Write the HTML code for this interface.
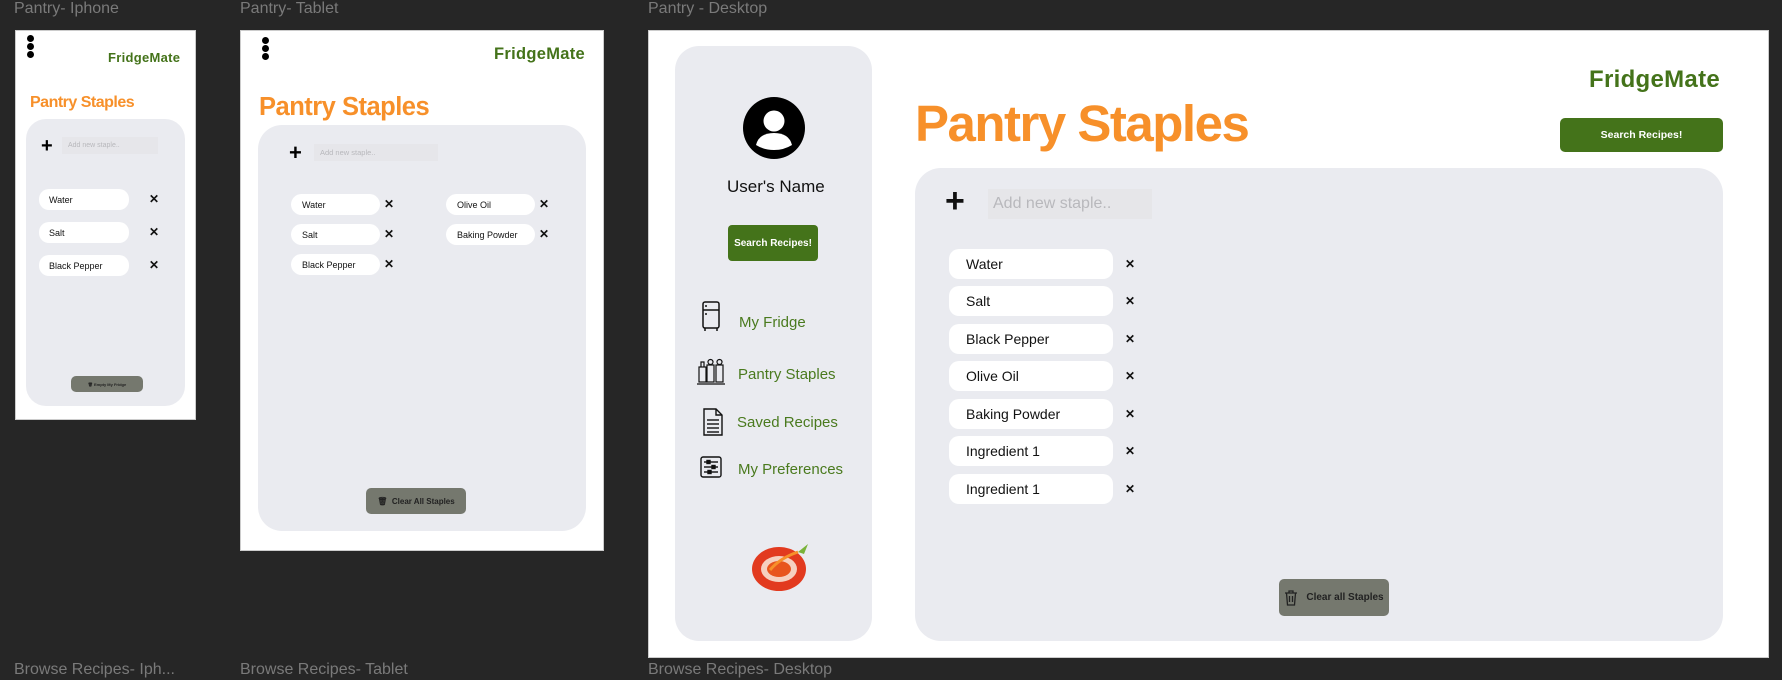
<!DOCTYPE html>
<html><head><meta charset="utf-8"><style>
*{margin:0;padding:0;box-sizing:border-box}
body{width:1782px;height:680px;background:#262626;position:relative;overflow:hidden;font-family:"Liberation Sans",sans-serif}
.a{position:absolute}
.lbl{color:#7a7a7a;font-size:16px;white-space:nowrap}
.frame{background:#fff;position:absolute}
.panel{background:#eaebf0;position:absolute}
.brand{color:#44731a;font-weight:900;white-space:nowrap;letter-spacing:0.3px}
.title{color:#f7902a;font-weight:900;white-space:nowrap;letter-spacing:-0.5px}
.pill{position:absolute;background:#fff;color:#111;white-space:nowrap;display:flex;align-items:center}
.x{position:absolute;color:#111;font-weight:bold;line-height:1}
.btn{position:absolute;background:#44731a;color:#fff;font-weight:bold;display:flex;align-items:center;justify-content:center;white-space:nowrap}
.clr{position:absolute;background:#75786e;color:#222;display:flex;align-items:center;justify-content:center;white-space:nowrap;font-weight:bold}
.ph{position:absolute;background:#e6e6ea;color:#b8b8bc;display:flex;align-items:center;white-space:nowrap}
.nav{position:absolute;color:#4a7a1e;font-size:15px;white-space:nowrap}
.dots{position:absolute;width:7px}
.dots i{display:block;width:7px;height:7px;border-radius:50%;background:#000;margin-bottom:1px}
</style></head><body>
<div class="a lbl" style="left:14px;top:0">Pantry- Iphone</div>
<div class="a lbl" style="left:240px;top:0">Pantry- Tablet</div>
<div class="a lbl" style="left:648px;top:0">Pantry - Desktop</div>
<div class="a lbl" style="left:14px;top:661px">Browse Recipes- Iph...</div>
<div class="a lbl" style="left:240px;top:661px">Browse Recipes- Tablet</div>
<div class="a lbl" style="left:648px;top:661px">Browse Recipes- Desktop</div>

<!-- iPhone -->
<div class="frame" style="left:15px;top:30px;width:181px;height:390px;border:1px solid #ccc"></div>
<div class="dots" style="left:27px;top:35px"><i></i><i></i><i></i></div>
<div class="a brand" style="left:108px;top:50px;font-size:13px">FridgeMate</div>
<div class="a title" style="left:30px;top:94px;font-size:16px">Pantry Staples</div>
<div class="panel" style="left:26px;top:119px;width:159px;height:287px;border-radius:20px"></div>
<div class="a" style="left:41px;top:136px;font-size:20px;font-weight:bold;line-height:1">+</div>
<div class="ph" style="left:62px;top:137px;width:96px;height:17px;font-size:7px;padding-left:6px">Add new staple..</div>
<div class="pill" style="left:39px;top:189px;width:90px;height:21px;border-radius:10px;font-size:9px;padding-left:10px">Water</div>
<div class="pill" style="left:39px;top:222px;width:90px;height:21px;border-radius:10px;font-size:9px;padding-left:10px">Salt</div>
<div class="pill" style="left:39px;top:255px;width:90px;height:21px;border-radius:10px;font-size:9px;padding-left:10px">Black Pepper</div>
<div class="x" style="left:149px;top:193px;font-size:12px">✕</div>
<div class="x" style="left:149px;top:226px;font-size:12px">✕</div>
<div class="x" style="left:149px;top:259px;font-size:12px">✕</div>
<div class="clr" style="left:71px;top:376px;width:72px;height:16px;border-radius:5px;font-size:4px">🗑&nbsp;Empty My Fridge</div>

<!-- Tablet -->
<div class="frame" style="left:240px;top:30px;width:364px;height:521px;border:1px solid #ccc"></div>
<div class="dots" style="left:262px;top:37px"><i></i><i></i><i></i></div>
<div class="a brand" style="left:494px;top:45px;font-size:16.5px">FridgeMate</div>
<div class="a title" style="left:259px;top:93px;font-size:25.5px">Pantry Staples</div>
<div class="panel" style="left:258px;top:125px;width:328px;height:406px;border-radius:24px"></div>
<div class="a" style="left:289px;top:142px;font-size:22px;font-weight:bold;line-height:1">+</div>
<div class="ph" style="left:314px;top:144px;width:124px;height:17px;font-size:7.5px;padding-left:6px">Add new staple..</div>
<div class="pill" style="left:291px;top:194px;width:89px;height:21px;border-radius:11px;font-size:9px;padding-left:11px">Water</div>
<div class="pill" style="left:291px;top:224px;width:89px;height:21px;border-radius:11px;font-size:9px;padding-left:11px">Salt</div>
<div class="pill" style="left:291px;top:254px;width:89px;height:21px;border-radius:11px;font-size:9px;padding-left:11px">Black Pepper</div>
<div class="pill" style="left:446px;top:194px;width:89px;height:21px;border-radius:11px;font-size:9px;padding-left:11px">Olive Oil</div>
<div class="pill" style="left:446px;top:224px;width:89px;height:21px;border-radius:11px;font-size:9px;padding-left:11px">Baking Powder</div>
<div class="x" style="left:384px;top:198px;font-size:12px">✕</div>
<div class="x" style="left:384px;top:228px;font-size:12px">✕</div>
<div class="x" style="left:384px;top:258px;font-size:12px">✕</div>
<div class="x" style="left:539px;top:198px;font-size:12px">✕</div>
<div class="x" style="left:539px;top:228px;font-size:12px">✕</div>
<div class="clr" style="left:366px;top:488px;width:100px;height:26px;border-radius:5px;font-size:8px">🗑&nbsp;&nbsp;Clear All Staples</div>

<!-- Desktop -->
<div class="frame" style="left:648px;top:30px;width:1121px;height:628px;border:1px solid #ccc"></div>
<div class="panel" style="left:675px;top:46px;width:197px;height:595px;border-radius:24px"></div>
<svg class="a" style="left:743px;top:97px" width="62" height="62" viewBox="0 0 62 62"><circle cx="31" cy="31" r="31" fill="#000"/><circle cx="31" cy="24" r="10.5" fill="#fff"/><path d="M13 48 Q16 36 31 36 Q46 36 49 48 Q41 53 31 53 Q21 53 13 48Z" fill="#fff"/></svg>
<div class="a" style="left:727px;top:177px;font-size:17px;color:#111">User's Name</div>
<div class="btn" style="left:728px;top:225px;width:90px;height:36px;border-radius:4px;font-size:10px">Search Recipes!</div>
<svg class="a" style="left:700px;top:300px" width="22" height="32" viewBox="0 0 22 32" fill="none" stroke="#111" stroke-width="1.5"><rect x="3" y="2" width="16" height="26" rx="2"/><line x1="3" y1="10" x2="19" y2="10"/><line x1="6" y1="5" x2="6" y2="7"/><line x1="6" y1="13" x2="6" y2="15"/><line x1="5" y1="28" x2="5" y2="31"/><line x1="17" y1="28" x2="17" y2="31"/></svg>
<div class="nav" style="left:739px;top:314px">My Fridge</div>
<svg class="a" style="left:697px;top:357px" width="28" height="28" viewBox="0 0 28 28" fill="none" stroke="#111" stroke-width="1.2"><rect x="2" y="10" width="7" height="15"/><rect x="10" y="8" width="7" height="17"/><rect x="19" y="8" width="7" height="17"/><circle cx="13.5" cy="5" r="2.5"/><circle cx="22.5" cy="5" r="2.5"/><path d="M4 10V5h3v5"/><line x1="0" y1="27" x2="28" y2="27"/></svg>
<div class="nav" style="left:738px;top:366px">Pantry Staples</div>
<svg class="a" style="left:702px;top:408px" width="22" height="28" viewBox="0 0 22 28" fill="none" stroke="#111" stroke-width="1.4"><path d="M2 1h12l6 6v20H2z"/><path d="M14 1v6h6"/><line x1="5" y1="12" x2="17" y2="12"/><line x1="5" y1="16" x2="17" y2="16"/><line x1="5" y1="20" x2="17" y2="20"/><line x1="5" y1="24" x2="17" y2="24"/></svg>
<div class="nav" style="left:737px;top:414px">Saved Recipes</div>
<svg class="a" style="left:700px;top:456px" width="22" height="22" viewBox="0 0 22 22" fill="none" stroke="#111" stroke-width="1.4"><rect x="1" y="1" width="20" height="20" rx="2"/><line x1="4" y1="6" x2="18" y2="6"/><line x1="4" y1="11" x2="18" y2="11"/><line x1="4" y1="16" x2="18" y2="16"/><rect x="7" y="4.5" width="3" height="3" fill="#111"/><rect x="12" y="9.5" width="3" height="3" fill="#111"/><rect x="8" y="14.5" width="3" height="3" fill="#111"/></svg>
<div class="nav" style="left:738px;top:461px">My Preferences</div>
<svg class="a" style="left:750px;top:540px" width="62" height="52" viewBox="0 0 62 52"><ellipse cx="29" cy="29" rx="27" ry="22" fill="#e23a1f"/><ellipse cx="29" cy="29" rx="18" ry="13" fill="#f6d0c0"/><ellipse cx="29" cy="29" rx="12" ry="8" fill="#e8551e"/><path d="M48 12l10-8-4 10z" fill="#7ab33a"/><path d="M20 30q10-12 28-18" stroke="#f7902a" stroke-width="3" fill="none"/></svg>

<div class="a title" style="left:915px;top:94px;font-size:51px;letter-spacing:-1.5px">Pantry Staples</div>
<div class="a brand" style="left:1589px;top:66px;font-size:24px">FridgeMate</div>
<div class="btn" style="left:1560px;top:118px;width:163px;height:34px;border-radius:5px;font-size:10.5px">Search Recipes!</div>
<div class="panel" style="left:915px;top:168px;width:808px;height:473px;border-radius:26px"></div>
<div class="a" style="left:945px;top:184px;font-size:34px;font-weight:bold;line-height:1;color:#111">+</div>
<div class="ph" style="left:988px;top:189px;width:164px;height:30px;font-size:16px;padding-left:5px;background:#e6e6e9">Add new staple..</div>
<div class="pill" style="left:949px;top:249px;width:164px;height:30px;border-radius:10px;font-size:14px;padding-left:17px">Water</div>
<div class="pill" style="left:949px;top:286px;width:164px;height:30px;border-radius:10px;font-size:14px;padding-left:17px">Salt</div>
<div class="pill" style="left:949px;top:324px;width:164px;height:30px;border-radius:10px;font-size:14px;padding-left:17px">Black Pepper</div>
<div class="pill" style="left:949px;top:361px;width:164px;height:30px;border-radius:10px;font-size:14px;padding-left:17px">Olive Oil</div>
<div class="pill" style="left:949px;top:399px;width:164px;height:30px;border-radius:10px;font-size:14px;padding-left:17px">Baking Powder</div>
<div class="pill" style="left:949px;top:436px;width:164px;height:30px;border-radius:10px;font-size:14px;padding-left:17px">Ingredient 1</div>
<div class="pill" style="left:949px;top:474px;width:164px;height:30px;border-radius:10px;font-size:14px;padding-left:17px">Ingredient 1</div>
<div class="x" style="left:1125px;top:258px;font-size:12px">✕</div>
<div class="x" style="left:1125px;top:295px;font-size:12px">✕</div>
<div class="x" style="left:1125px;top:333px;font-size:12px">✕</div>
<div class="x" style="left:1125px;top:370px;font-size:12px">✕</div>
<div class="x" style="left:1125px;top:408px;font-size:12px">✕</div>
<div class="x" style="left:1125px;top:445px;font-size:12px">✕</div>
<div class="x" style="left:1125px;top:483px;font-size:12px">✕</div>
<div class="clr" style="left:1279px;top:579px;width:110px;height:37px;border-radius:5px;font-size:10px">
<svg width="14" height="16" viewBox="0 0 14 16" fill="none" stroke="#222" stroke-width="1.3" style="margin-right:8px"><path d="M1 3h12M5 3V1h4v2M2.5 3l1 12h7l1-12M5.5 6v6M8.5 6v6"/></svg>Clear all Staples</div>
</body></html>
